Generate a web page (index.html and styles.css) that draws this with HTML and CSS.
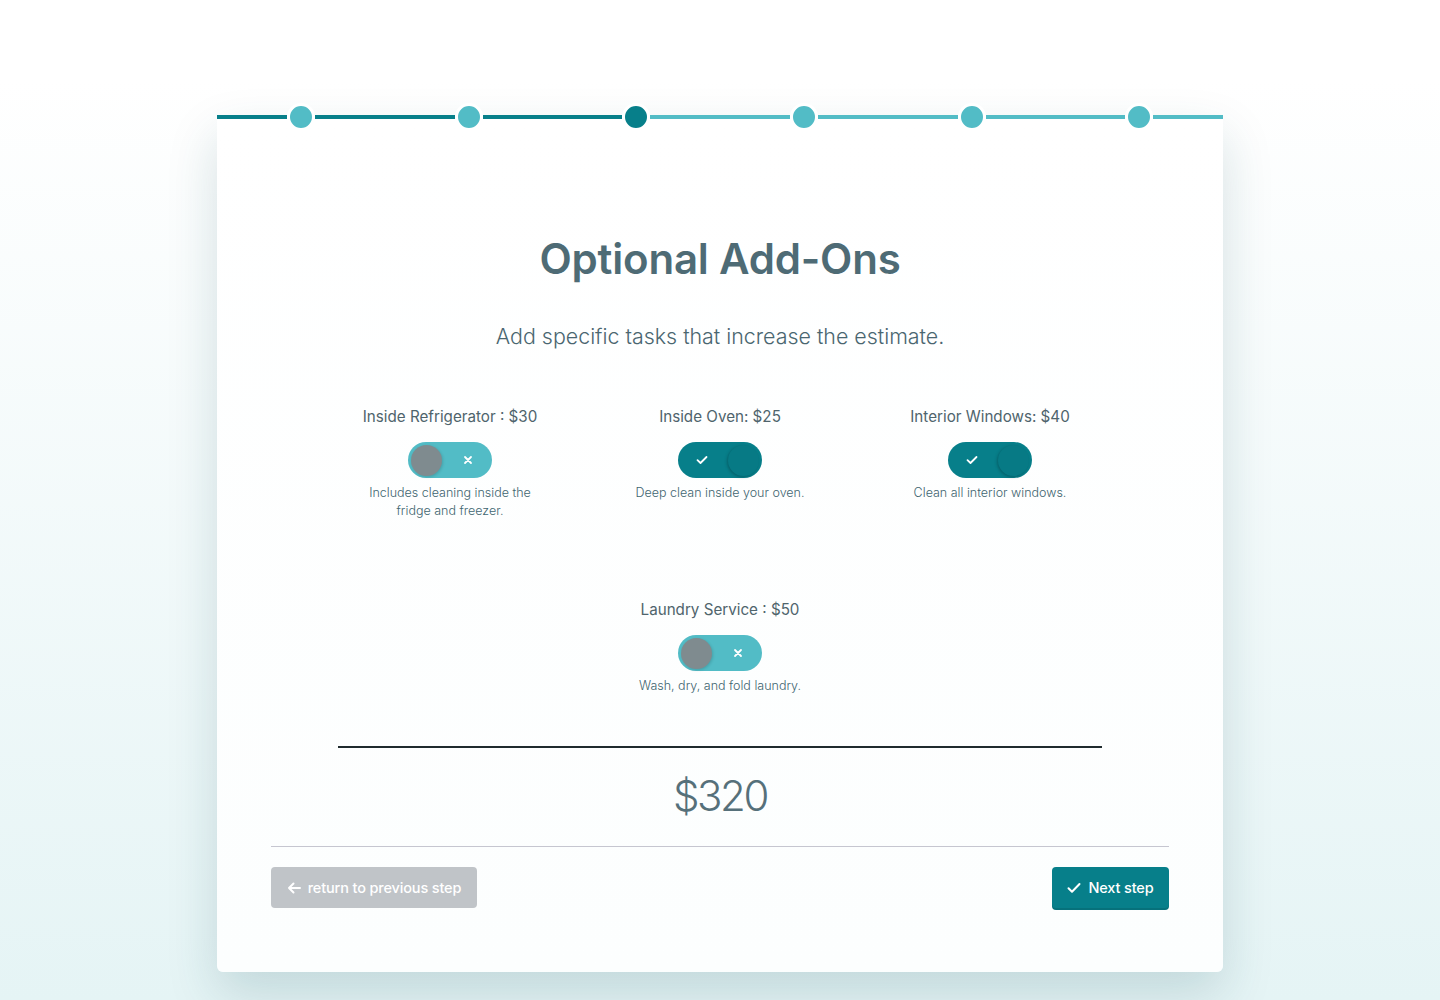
FILE: index.html
```html
<!DOCTYPE html>
<html lang="en">
<head>
<meta charset="utf-8">
<title>Optional Add-Ons</title>
<link rel="stylesheet" href="styles.css">
</head>
<body>
<main class="card">
  <div class="stepper">
    <div class="step"><span class="seg dark"></span><span class="dot"></span><span class="seg dark"></span></div>
    <div class="step"><span class="seg dark"></span><span class="dot"></span><span class="seg dark"></span></div>
    <div class="step"><span class="seg dark"></span><span class="dot current"></span><span class="seg"></span></div>
    <div class="step"><span class="seg"></span><span class="dot"></span><span class="seg"></span></div>
    <div class="step"><span class="seg"></span><span class="dot"></span><span class="seg"></span></div>
    <div class="step"><span class="seg"></span><span class="dot"></span><span class="seg"></span></div>
  </div>

  <h1 class="title">Optional Add-Ons</h1>
  <p class="subtitle">Add specific tasks that increase the estimate.</p>

  <div class="options">
    <div class="option">
      <div class="label">Inside Refrigerator : $30</div>
      <div class="toggle off">
        <span class="knob"></span>
        <svg class="icon" viewBox="0 0 10 10" width="10" height="10"><path d="M2 2 L8 8 M8 2 L2 8" stroke="#fff" stroke-width="1.8" stroke-linecap="round"/></svg>
      </div>
      <p class="desc">Includes cleaning inside the fridge and freezer.</p>
    </div>
    <div class="option">
      <div class="label">Inside Oven: $25</div>
      <div class="toggle on">
        <svg class="icon" viewBox="0 0 12 10" width="12" height="10"><path d="M1.5 5.2 L4.5 8 L10.5 2" fill="none" stroke="#fff" stroke-width="1.8" stroke-linecap="round" stroke-linejoin="round"/></svg>
        <span class="knob"></span>
      </div>
      <p class="desc">Deep clean inside your oven.</p>
    </div>
    <div class="option">
      <div class="label">Interior Windows: $40</div>
      <div class="toggle on">
        <svg class="icon" viewBox="0 0 12 10" width="12" height="10"><path d="M1.5 5.2 L4.5 8 L10.5 2" fill="none" stroke="#fff" stroke-width="1.8" stroke-linecap="round" stroke-linejoin="round"/></svg>
        <span class="knob"></span>
      </div>
      <p class="desc">Clean all interior windows.</p>
    </div>
    <div class="option second">
      <div class="label">Laundry Service : $50</div>
      <div class="toggle off">
        <span class="knob"></span>
        <svg class="icon" viewBox="0 0 10 10" width="10" height="10"><path d="M2 2 L8 8 M8 2 L2 8" stroke="#fff" stroke-width="1.8" stroke-linecap="round"/></svg>
      </div>
      <p class="desc">Wash, dry, and fold laundry.</p>
    </div>
  </div>

  <hr class="divider">
  <div class="price">$320</div>
  <hr class="rule">

  <div class="actions">
    <button class="btn prev" type="button">
      <svg viewBox="0 0 14 12" width="14" height="12"><path d="M13 6 H2 M6.5 1.5 L2 6 L6.5 10.5" fill="none" stroke="#fff" stroke-width="2" stroke-linecap="round" stroke-linejoin="round"/></svg>
      <span>return to previous step</span>
    </button>
    <button class="btn next" type="button">
      <svg viewBox="0 0 14 12" width="14" height="12"><path d="M1.5 6.3 L5 9.8 L12.5 2" fill="none" stroke="#fff" stroke-width="2" stroke-linecap="round" stroke-linejoin="round"/></svg>
      <span>Next step</span>
    </button>
  </div>
</main>
</body>
</html>
```

FILE: styles.css
```css
* { box-sizing: border-box; }

html, body {
  margin: 0;
  padding: 0;
}

body {
  min-height: 1000px;
  background: linear-gradient(180deg, #ffffff 0%, #ffffff 8%, #e5f4f5 100%);
  font-family: Inter, "Noto Sans", "Liberation Sans", sans-serif;
  color: #4c6068;
  padding-top: 115px;
}

.card {
  display: flow-root;
  width: 1006px;
  margin: 0 auto;
  background: linear-gradient(180deg, #ffffff 0%, #fcfefe 100%);
  border-radius: 0 0 6px 6px;
  box-shadow: 0 22px 50px rgba(20, 80, 90, 0.17);
  padding: 0 54px 64px;
}

.stepper {
  display: flex;
  margin: -12px -54px 0;
  height: 28px;
}

.step {
  flex: 1;
  display: flex;
  align-items: center;
}

.seg {
  flex: 1;
  height: 4px;
  background: #52bcc6;
}

.seg.dark { background: #077f8a; }

.dot {
  width: 28px;
  height: 28px;
  border-radius: 50%;
  background: #52bcc6;
  border: 3px solid #ffffff;
  flex: none;
}

.dot.current { background: #077f8a; }

.title {
  margin: 101px 0 0;
  text-align: center;
  font-size: 42px;
  line-height: 53px;
  font-weight: 600;
  color: #4e6b75;
  letter-spacing: -0.2px;
}

.subtitle {
  margin: 36px 0 0;
  text-align: center;
  font-size: 21.4px;
  line-height: 30px;
  font-weight: 300;
  color: #4a6670;
}

.options {
  width: 810px;
  margin: 55px auto 0;
  display: grid;
  grid-template-columns: repeat(3, 1fr);
  row-gap: 79px;
}

.option {
  display: flex;
  flex-direction: column;
  align-items: center;
  text-align: center;
}

.option.second { grid-column: 2; }

.label {
  font-size: 15.2px;
  line-height: 22px;
  font-weight: 400;
  color: #4f646c;
}

.toggle {
  margin-top: 14px;
  width: 84px;
  height: 36px;
  border-radius: 18px;
  display: flex;
  align-items: center;
  justify-content: space-between;
  padding: 0 3px;
}

.toggle.off {
  background: #52bcc6;
  padding-right: 19px;
}

.toggle.on {
  background: #077f8a;
  padding-left: 18px;
}

.knob {
  width: 31px;
  height: 31px;
  border-radius: 50%;
}

.toggle.off .knob {
  background: #7f8b8f;
  box-shadow: 1px 1px 3px rgba(0, 0, 0, 0.15);
}

.toggle.on .knob {
  background: #077a85;
  box-shadow: -1px 1px 3px rgba(0, 40, 45, 0.35);
}

.icon { display: block; }

.desc {
  margin: 6px 0 0;
  max-width: 172px;
  font-size: 12.5px;
  line-height: 18px;
  font-weight: 300;
  color: #3f6570;
}

.option:nth-child(2) .desc,
.option:nth-child(3) .desc,
.option.second .desc { max-width: none; }

.divider {
  width: 764px;
  margin: 51px auto 0;
  border: 0;
  height: 2px;
  background: #1f2b2e;
}

.price {
  margin-top: 21px;
  text-align: center;
  font-size: 42px;
  line-height: 53px;
  font-weight: 300;
  color: #56707a;
  letter-spacing: -2.4px;
}

.rule {
  margin: 24px 0 0;
  border: 0;
  height: 1px;
  background: #c6c6d0;
}

.actions {
  margin-top: 20px;
  display: flex;
  justify-content: space-between;
}

.btn {
  height: 41px;
  border: 0;
  border-radius: 4px;
  display: flex;
  align-items: center;
  justify-content: center;
  gap: 7px;
  white-space: nowrap;
  font-family: inherit;
  font-size: 14.5px;
  font-weight: 500;
  color: #ffffff;
  letter-spacing: -0.15px;
  padding: 0 14px;
}

.btn.prev {
  background: #c0c4c8;
  width: 206px;
}

.btn.next {
  background: #077f8a;
  box-shadow: 0 2px 0 #06717b;
  width: 117px;
  padding: 0 12px;
}
```
